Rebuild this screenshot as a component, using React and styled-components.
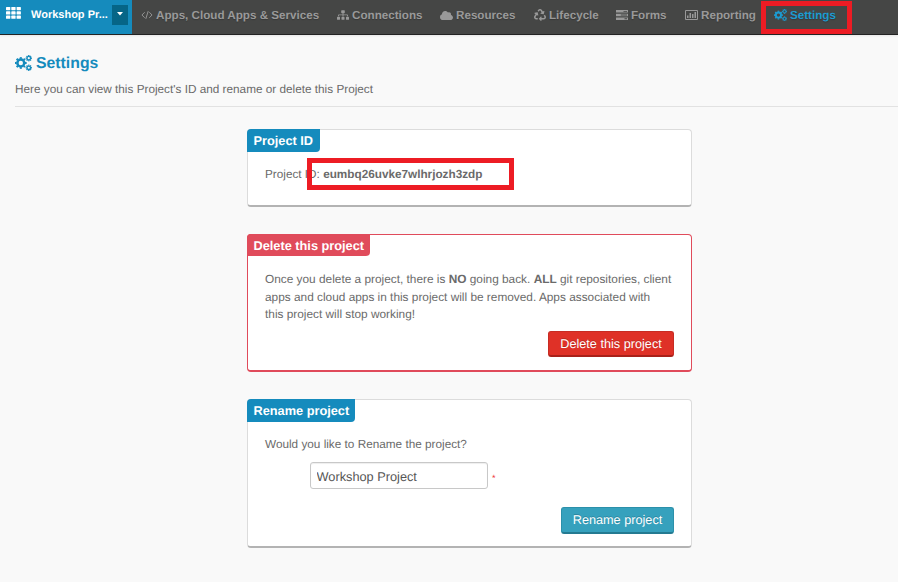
import React from "react";
import styled, { createGlobalStyle, css } from "styled-components";
import { FaSitemap, FaCloud, FaRecycle } from "react-icons/fa";

const GlobalStyle = createGlobalStyle`
  * { box-sizing: border-box; }
  html, body { margin: 0; background: #f9f9f9; }
  body {
    height: 582px;
    overflow: hidden;
    font: 11.78px/18px "Liberation Sans", Arial, sans-serif;
    color: #6a6a6a;
    text-rendering: geometricPrecision;
  }
  svg { display: block; flex: none; }
`;

const Header = styled.header`
  display: flex;
  height: 35px;
  background: #454645;
  border-bottom: 1px solid #232323;
  box-shadow: 0 1px 2px rgba(0, 0, 0, 0.08);
`;

const ProjectSwitcher = styled.div`
  display: flex;
  align-items: flex-start;
  width: 132px;
  height: 34px;
  padding: 5px 4px 0 6px;
  background: #158bbd;
  color: #fff;
`;

const GridIcon = styled.svg`
  margin-top: 2px;
`;

const ProjectName = styled.span`
  width: 91px;
  padding-left: 10px;
  font-weight: bold;
  font-size: 11px;
  line-height: 20px;
  white-space: nowrap;
`;

const Caret = styled.button`
  display: flex;
  align-items: center;
  justify-content: center;
  width: 16px;
  height: 20px;
  margin: 0;
  padding: 0 0 2px;
  border: 0;
  background: #066587;
`;

const Nav = styled.nav`
  display: flex;
  align-items: flex-start;
  padding-left: 9px;
`;

const NavItem = styled.a`
  position: relative;
  display: flex;
  align-items: center;
  width: ${(p) => p.$width}px;
  height: 30px;
  gap: 3px;
  font-weight: bold;
  font-size: 11.65px;
  line-height: 20px;
  white-space: nowrap;
  color: ${(p) => (p.$active ? "#1c9bd1" : "#999")};
  text-shadow: 0 1px 1px rgba(0, 0, 0, 0.2);
`;

const NavLabel = styled.span`
  padding-top: 1px;
`;

const Highlight = styled.span`
  position: absolute;
  left: ${(p) => p.$left}px;
  top: ${(p) => p.$top}px;
  width: ${(p) => p.$width}px;
  height: ${(p) => p.$height}px;
  border: 5px solid #ed1c24;
  pointer-events: none;
`;

const PageHead = styled.div`
  margin-left: 15px;
  height: 72px;
  padding-top: 18px;
  border-bottom: 1px solid #e2e2e2;
`;

const Title = styled.h1`
  display: flex;
  align-items: center;
  gap: 4px;
  margin: 0;
  height: 20px;
  color: #158bbd;
  font-size: 15.8px;
  line-height: 20px;
`;

const TitleText = styled.span`
  padding-top: 1px;
`;

const Subtitle = styled.p`
  margin: 8px 0 0;
`;

const Panels = styled.main`
  display: flex;
  flex-direction: column;
  gap: 27px;
  width: 445px;
  margin: 22px 0 0 247px;
`;

const Panel = styled.section`
  height: ${(p) => p.$height}px;
  background: #fff;
  border: 1px solid ${(p) => (p.$danger ? "#e04b5b" : "#dcdcdc")};
  border-bottom: 2px solid ${(p) => (p.$danger ? "#e04b5b" : "#b3b3b3")};
  border-radius: 4px;
`;

const PanelLabel = styled.h2`
  width: ${(p) => p.$width}px;
  height: ${(p) => (p.$danger ? 22 : 23)}px;
  margin: -1px 0 0 -1px;
  padding-left: 6.5px;
  border-radius: 4px 0 4px 0;
  background: ${(p) => (p.$danger ? "#e04b5b" : "#158bbd")};
  color: #fff;
  font-size: 12.75px;
  line-height: 23px;
  white-space: nowrap;
`;

const PanelBody = styled.div`
  display: flex;
  flex-direction: column;
  padding: ${(p) => p.$top}px 17px 0;
`;

const Text = styled.p`
  position: relative;
  margin: 0;
  font-size: ${(p) => p.$size ?? 11.78}px;
  line-height: 17.5px;
  white-space: nowrap;
`;

const Button = styled.button`
  align-self: flex-end;
  width: ${(p) => p.$width}px;
  height: ${(p) => p.$height}px;
  margin-top: ${(p) => p.$top}px;
  padding: ${(p) => (p.$danger ? 1 : 0)}px 0 0;
  border: 1px solid;
  border-bottom-width: 2px;
  border-radius: 3px;
  color: #fff;
  font: 12.7px "Liberation Sans", Arial, sans-serif;
  text-rendering: inherit;
  text-shadow: 0 -1px 0 rgba(0, 0, 0, 0.2);
  ${(p) =>
    p.$danger
      ? css`
          background: #df3127;
          border-color: #c72c23 #c72c23 #a8211a;
        `
      : css`
          background: #36a1bd;
          border-color: #2c90aa #2c90aa #247a91;
        `}
`;

const Field = styled.div`
  display: flex;
  align-items: center;
  gap: 4px;
  margin: 8px 0 0 45px;
  color: #e33;
  font-size: 9px;
`;

const Required = styled.span`
  padding-top: 5px;
`;

const Input = styled.input`
  width: 178px;
  height: 27px;
  padding: 2px 6px 0 5.5px;
  border: 1px solid #c8c8c8;
  border-radius: 3px;
  box-shadow: inset 0 1px 1px rgba(0, 0, 0, 0.07);
  background: #fff;
  color: #555;
  font: 12.75px "Liberation Sans", Arial, sans-serif;
  text-rendering: inherit;
  outline: none;
`;

const CodeIcon = () => (
  <svg width="12" height="10" viewBox="0 0 13 10" fill="none" stroke="currentColor" strokeWidth="1">
    <path d="M4 2 1 5l3 3M9 2l3 3-3 3M7.8.8 5.2 9.2" />
  </svg>
);

const FormsIcon = () => (
  <svg width="12" height="10" viewBox="0 0 12 10" fill="currentColor">
    <path d="M0 0h12v2.6H0zM0 3.7h12v2.6H0zM0 7.4h12V10H0z" />
    <path d="M7.5.9H11v.9H7.5zM4.8 4.6H11v.9H4.8zM8.5 8.3H11v.9H8.5z" fill="#454645" />
  </svg>
);

const ChartIcon = () => (
  <svg width="13" height="10" viewBox="0 0 13 10" fill="currentColor">
    <path fillRule="evenodd" d="M1 0h11a1 1 0 0 1 1 1v8a1 1 0 0 1-1 1H1a1 1 0 0 1-1-1V1a1 1 0 0 1 1-1zm0 1v8h11V1z" />
    <path d="M2 5.5h1.5V8H2zM4.5 3H6v5H4.5zM7 4h1.5v4H7zM9.5 2H11v6H9.5z" />
  </svg>
);

const Gear = ({ cx, cy, r, hole, tooth }) => (
  <g transform={`translate(${cx} ${cy})`}>
    <circle r={(r + hole) / 2} fill="none" stroke="currentColor" strokeWidth={r - hole} />
    {[0, 45, 90, 135, 180, 225, 270, 315].map((a) => (
      <rect key={a} x={-tooth / 2} y={-r - tooth * 0.55} width={tooth} height={tooth * 0.8} transform={`rotate(${a})`} fill="currentColor" />
    ))}
  </g>
);

const CogsIcon = ({ size }) => (
  <svg width={size} height={size * 0.94} viewBox="0 0 17 16">
    <Gear cx={5.8} cy={8} r={4.7} hole={2.2} tooth={2.1} />
    <Gear cx={13.8} cy={3.2} r={2.4} hole={1.1} tooth={1.4} />
    <Gear cx={13.8} cy={12.8} r={2.4} hole={1.1} tooth={1.4} />
  </svg>
);

export default function App() {
  return (
    <>
      <GlobalStyle />
      <Header>
        <ProjectSwitcher>
          <GridIcon width="15" height="12" viewBox="0 0 15 12" fill="currentColor">
            {[0, 4.3, 8.6].map((y) =>
              [0, 5.3, 10.6].map((x) => (
                <rect key={`${x}-${y}`} x={x} y={y} width="4.3" height="3.2" rx=".6" />
              ))
            )}
          </GridIcon>
          <ProjectName>Workshop Pr...</ProjectName>
          <Caret aria-label="Switch project">
            <svg width="6" height="4" viewBox="0 0 6 4" fill="#fff">
              <path d="M0 0h6L3 3.6z" />
            </svg>
          </Caret>
        </ProjectSwitcher>
        <Nav>
          <NavItem $width={196}><CodeIcon /><NavLabel>Apps, Cloud Apps &amp; Services</NavLabel></NavItem>
          <NavItem $width={103}><FaSitemap size={12} /><NavLabel>Connections</NavLabel></NavItem>
          <NavItem $width={94}><FaCloud size={13} /><NavLabel>Resources</NavLabel></NavItem>
          <NavItem $width={82}><FaRecycle size={12} /><NavLabel>Lifecycle</NavLabel></NavItem>
          <NavItem $width={69}><FormsIcon /><NavLabel>Forms</NavLabel></NavItem>
          <NavItem $width={89}><ChartIcon /><NavLabel>Reporting</NavLabel></NavItem>
          <NavItem $width={70} $active>
            <CogsIcon size={13} /><NavLabel>Settings</NavLabel>
            <Highlight $left={-13} $top={1} $width={91} $height={33} />
          </NavItem>
        </Nav>
      </Header>
      <PageHead>
        <Title><CogsIcon size={17} /><TitleText>Settings</TitleText></Title>
        <Subtitle>Here you can view this Project's ID and rename or delete this Project</Subtitle>
      </PageHead>
      <Panels>
        <Panel $height={78}>
          <PanelLabel $width={73}>Project ID</PanelLabel>
          <PanelBody $top={14}>
            <Text $size={11.75}>
              Project ID: <b>eumbq26uvke7wlhrjozh3zdp</b>
              <Highlight $left={42} $top={-8} $width={207} $height={32} />
            </Text>
          </PanelBody>
        </Panel>
        <Panel $height={138} $danger>
          <PanelLabel $width={123} $danger>Delete this project</PanelLabel>
          <PanelBody $top={15}>
            <Text $size={11.85}>
              Once you delete a project, there is <b>NO</b> going back. <b>ALL</b> git repositories, client
              <br />
              apps and cloud apps in this project will be removed. Apps associated with
              <br />
              this project will stop working!
            </Text>
            <Button $danger $width={126} $height={26} $top={7}>Delete this project</Button>
          </PanelBody>
        </Panel>
        <Panel $height={149}>
          <PanelLabel $width={108}>Rename project</PanelLabel>
          <PanelBody $top={14}>
            <Text>Would you like to Rename the project?</Text>
            <Field>
              <Input defaultValue="Workshop Project" aria-label="Project name" />
              <Required>*</Required>
            </Field>
            <Button $width={113} $height={27} $top={18}>Rename project</Button>
          </PanelBody>
        </Panel>
      </Panels>
    </>
  );
}
